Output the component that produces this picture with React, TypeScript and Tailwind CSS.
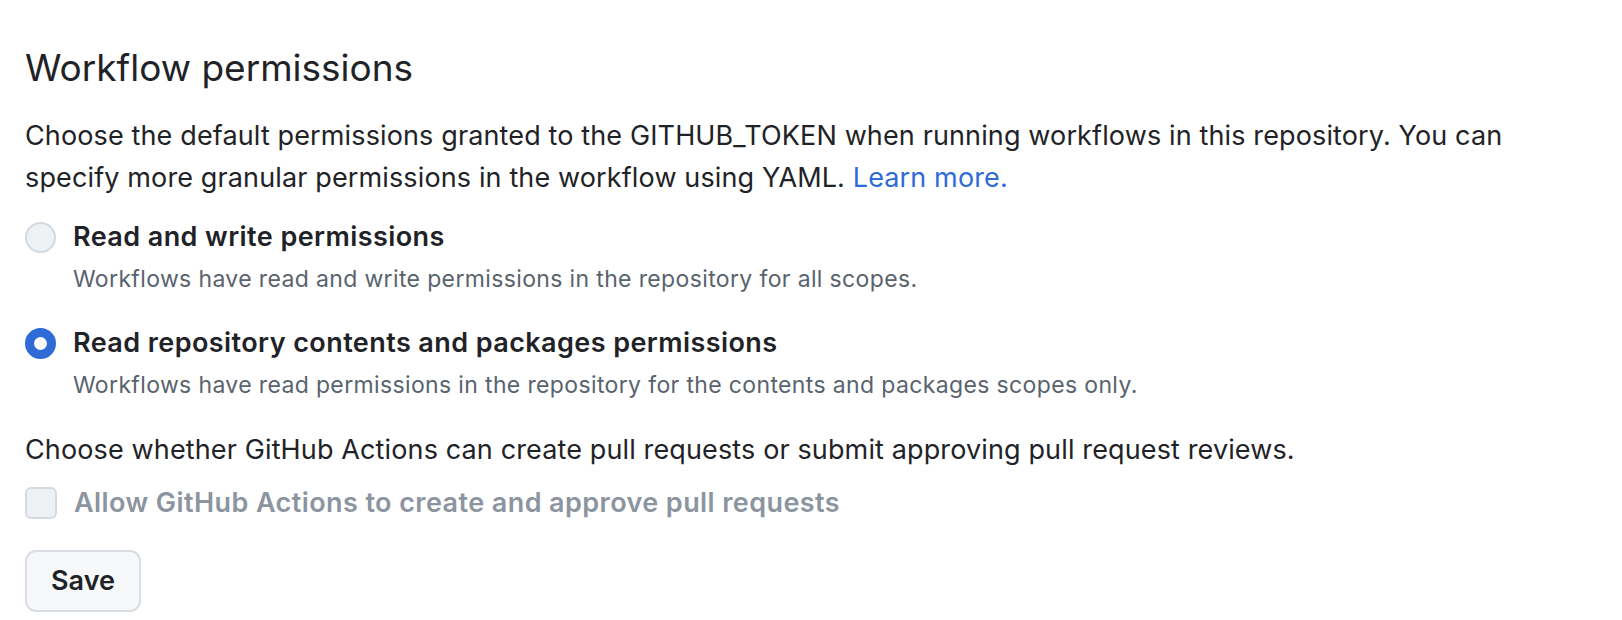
import React from "react";

interface OptionProps {
  label: string;
  caption: string;
  checked?: boolean;
  className?: string;
}

function RadioOption({ label, caption, checked, className }: OptionProps) {
  return (
    <div className={className}>
      <div className="flex items-center gap-[17px]">
        {checked ? (
          <span className="h-[31px] w-[31px] shrink-0 rounded-full border-[9px] border-[#2f6bd7] bg-white" />
        ) : (
          <span className="h-[31px] w-[31px] shrink-0 rounded-full border-2 border-[#d3d9e0] bg-[#eff2f5]" />
        )}
        <span className="text-[27px] leading-[40px] font-semibold tracking-[0.42px] text-[#1f2328]">{label}</span>
      </div>
      <p className="mt-[6px] pl-[48px] text-[23px] leading-[32px] tracking-[0.36px] text-[#59636e]">{caption}</p>
    </div>
  );
}

export default function App() {
  return (
    <div
      className="min-h-screen bg-white px-[25px] pt-[44px]"
      style={{ fontFamily: "Inter, 'Liberation Sans', sans-serif" }}
    >
      <h2 className="text-[37px] leading-[48px] font-normal text-[#1f2328]">Workflow permissions</h2>
      <p className="mt-[23px] text-[27px] leading-[42px] tracking-[0.13px] text-[#1f2328]">
        Choose the default permissions granted to the GITHUB_TOKEN when running workflows in this repository. You can
        <br />
        specify more granular permissions in the workflow using YAML.{" "}
        <a href="#" className="text-[#2f6bd7]">
          Learn more.
        </a>
      </p>

      <RadioOption
        className="mt-[18px]"
        label="Read and write permissions"
        caption="Workflows have read and write permissions in the repository for all scopes."
      />
      <RadioOption
        className="mt-[28px]"
        checked
        label="Read repository contents and packages permissions"
        caption="Workflows have read permissions in the repository for the contents and packages scopes only."
      />

      <p className="mt-[29px] text-[27px] leading-[40px] tracking-[0.13px] text-[#1f2328]">
        Choose whether GitHub Actions can create pull requests or submit approving pull request reviews.
      </p>
      <div className="mt-[13px] flex items-center gap-[17px]">
        <span className="h-[32px] w-[32px] shrink-0 rounded-[6px] border-2 border-[#d5dae0] bg-[#eef1f4]" />
        <span className="text-[27px] leading-[40px] font-semibold tracking-[0.42px] text-[#8c959f]">
          Allow GitHub Actions to create and approve pull requests
        </span>
      </div>

      <button className="mt-[27px] flex h-[62px] w-[116px] items-center justify-center rounded-[11px] border-2 border-[#d8dee4] bg-[#f6f8fa] text-[27px] font-semibold text-[#1f2328]">
        Save
      </button>
    </div>
  );
}
